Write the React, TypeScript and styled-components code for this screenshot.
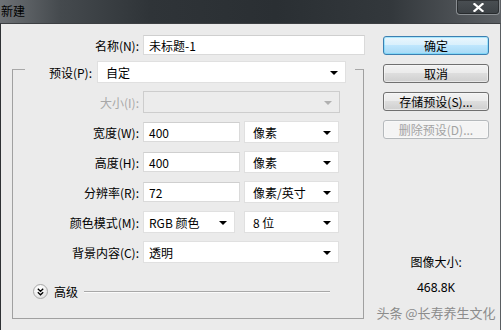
import React from 'react';
import styled, { createGlobalStyle } from 'styled-components';

const Global = createGlobalStyle`
  html, body { margin: 0; padding: 0; width: 501px; height: 330px; overflow: hidden; background: #ebebeb; }
  body { font-family: "Noto Sans CJK SC", "Microsoft YaHei", sans-serif; font-size: 12px; color: #000; }
  #root { width: 501px; height: 330px; }
`;

const Window = styled.div`
  width: 501px;
  height: 330px;
  display: flex;
  flex-direction: column;
  background: #ebebeb;
  overflow: hidden;
`;

const TitleBar = styled.div`
  height: 23px;
  flex: none;
  display: flex;
  align-items: flex-start;
  justify-content: space-between;
  background: linear-gradient(90deg, #6d7175 0%, #454a4e 12%, #2f3438 30%, #2a2f33 55%, #33383c 78%, #5c6064 100%);
`;

const Title = styled.div`
  font-size: 12px;
  line-height: 21px;
  padding-left: 1px;
  color: #000;
`;

const CloseBtn = styled.div`
  width: 44px;
  height: 15px;
  margin-right: 1px;
  box-sizing: border-box;
  border: 1px solid #8a8e92;
  border-top: none;
  border-radius: 0 0 4px 4px;
  display: flex;
  align-items: center;
  justify-content: center;
  background: linear-gradient(180deg, #4a4f53, #3c4145);
  box-shadow: inset 0 0 0 1px rgba(0, 0, 0, 0.35);
`;

const Body = styled.div`
  flex: 1;
  display: flex;
  border-top: 1px solid #3c3f42;
  border-left: 1px solid #2e3134;
  border-right: 1px solid #5a5e62;
`;

const LeftCol = styled.div`
  width: 382px;
  flex: none;
  display: flex;
  flex-direction: column;
  padding-top: 10px;
  box-sizing: border-box;
`;

const RightCol = styled.div`
  width: 106px;
  flex: none;
  display: flex;
  flex-direction: column;
  align-items: center;
  padding-top: 12px;
  padding-bottom: 5px;
  box-sizing: border-box;
`;

const ButtonStack = styled.div`
  display: flex;
  flex-direction: column;
  gap: 9px;
  width: 106px;
`;

const Button = styled.div<{ $primary?: boolean; $disabled?: boolean }>`
  height: 19px;
  box-sizing: border-box;
  border-radius: 3px;
  display: flex;
  align-items: center;
  justify-content: center;
  font-size: 12px;
  line-height: 1;
  color: ${p => (p.$disabled ? '#a3a3a3' : '#000')};
  border: 1px solid ${p => (p.$primary ? '#3c7fb1' : p.$disabled ? '#b5b9bc' : '#707070')};
  background: ${p =>
    p.$primary
      ? 'linear-gradient(180deg, #eaf6fd 0%, #d9f0fc 45%, #bee6fd 50%, #a7d9f5 100%)'
      : p.$disabled
      ? '#f4f4f4'
      : 'linear-gradient(180deg, #f2f2f2 0%, #ebebeb 45%, #dddddd 50%, #cfcfcf 100%)'};
  box-shadow: ${p => (p.$primary ? 'inset 0 0 0 1px #48d1fb66' : 'inset 0 0 0 1px #fcfcfc88')};
`;

const Info = styled.div`
  margin-top: auto;
  display: flex;
  flex-direction: column;
  align-items: center;
`;

const InfoLine = styled.div<{ $muted?: boolean }>`
  height: 25px;
  line-height: 25px;
  white-space: nowrap;
  font-size: ${p => (p.$muted ? '13px' : '12px')};
  color: ${p => (p.$muted ? '#8c8c8c' : '#000')};
  font-family: ${p => (p.$muted ? '"Noto Sans CJK SC", sans-serif' : '"Noto Sans", "Noto Sans CJK SC", sans-serif')};
`;

const Row = styled.div<{ $labelWidth: number }>`
  display: grid;
  grid-template-columns: ${p => p.$labelWidth}px auto;
  column-gap: 4px;
  align-items: center;
  height: 22px;
`;

const ControlGroup = styled.div`
  display: flex;
  align-items: center;
`;

const Label = styled.div<{ $disabled?: boolean }>`
  text-align: right;
  white-space: nowrap;
  font-size: 12px;
  color: ${p => (p.$disabled ? '#a8a8a8' : '#000')};
`;

const TextBox = styled.div<{ $w: number }>`
  width: ${p => p.$w}px;
  height: 20px;
  box-sizing: border-box;
  background: #fff;
  border: 1px solid #dadada;
  border-top-color: #cfcfcf;
  padding-left: 5px;
  display: flex;
  align-items: center;
  font-size: 12px;
  white-space: nowrap;
`;

const Select = styled.div<{ $w: number; $pad?: number; $disabled?: boolean; $ml?: number }>`
  width: ${p => p.$w}px;
  height: 22px;
  margin-left: ${p => p.$ml ?? 0}px;
  box-sizing: border-box;
  background: ${p => (p.$disabled ? '#ececec' : '#fff')};
  border: 1px solid ${p => (p.$disabled ? '#cdcdcd' : '#e0e0e0')};
  padding-left: ${p => p.$pad ?? 5}px;
  padding-right: 7px;
  display: flex;
  align-items: center;
  justify-content: space-between;
  font-size: 12px;
  white-space: nowrap;
`;

const Arrow = styled.span<{ $disabled?: boolean }>`
  width: 0;
  height: 0;
  border-left: 4px solid transparent;
  border-right: 4px solid transparent;
  border-top: 4px solid ${p => (p.$disabled ? '#b0b0b0' : '#000')};
  margin-top: 1px;
`;

const Group = styled.fieldset`
  margin: 0 0 0 11px;
  width: 352px;
  box-sizing: border-box;
  border: 1px solid #a0a0a0;
  border-top-color: #a8a8a8;
  padding: 8px 0 19px 0;
  display: flex;
  flex-direction: column;
  gap: 8px;
  min-width: 0;
`;

const Legend = styled.legend`
  margin-left: 12px;
  padding: 5px 9px 0 0;
  display: flex;
  align-items: center;
  height: 27px;
  box-sizing: border-box;
`;

const LegendLabel = styled.div`
  width: 67px;
  text-align: right;
  margin-right: 5px;
  font-size: 12px;
  white-space: nowrap;
`;

const Rows = styled.div`
  display: flex;
  flex-direction: column;
  gap: 8px;
`;

const Advanced = styled.div`
  display: flex;
  align-items: center;
  height: 15px;
  margin: 13px 33px 0 20px;
  gap: 6px;
`;

const AdvToggle = styled.div`
  width: 15px;
  height: 15px;
  box-sizing: border-box;
  border-radius: 50%;
  border: 1px solid #a9a9a9;
  background: radial-gradient(circle at 40% 30%, #ffffff 0%, #f3f3f3 45%, #d4d4d4 100%);
  display: flex;
  align-items: center;
  justify-content: center;
`;

const AdvText = styled.div`
  font-size: 12px;
  line-height: 15px;
`;

const AdvLine = styled.div`
  flex: 1;
  height: 0;
  border-top: 1px solid #a8a8a8;
  border-bottom: 1px solid #fafafa;
`;

export default function App() {
  return (
    <>
      <Global />
      <Window>
        <TitleBar>
          <Title>新建</Title>
          <CloseBtn>
            <svg width="11" height="9" viewBox="0 0 11 9">
              <path d="M1.5 1 L9.5 8 M9.5 1 L1.5 8" stroke="#fff" strokeWidth="2.2" strokeLinecap="square" />
            </svg>
          </CloseBtn>
        </TitleBar>
        <Body>
          <LeftCol>
            <Row $labelWidth={138}>
              <Label>名称(N):</Label>
              <TextBox $w={222}>未标题-1</TextBox>
            </Row>
            <Group>
              <Legend>
                <LegendLabel>预设(P):</LegendLabel>
                <Select $w={249} $pad={8}>
                  <span>自定</span>
                  <Arrow />
                </Select>
              </Legend>
              <Rows>
                <Row $labelWidth={126}>
                  <Label $disabled>大小(I):</Label>
                  <Select $w={197} $disabled>
                    <span />
                    <Arrow $disabled />
                  </Select>
                </Row>
                <Row $labelWidth={126}>
                  <Label>宽度(W):</Label>
                  <ControlGroup>
                    <TextBox $w={97}>400</TextBox>
                    <Select $w={95} $pad={8} $ml={4}>
                      <span>像素</span>
                      <Arrow />
                    </Select>
                  </ControlGroup>
                </Row>
                <Row $labelWidth={126}>
                  <Label>高度(H):</Label>
                  <ControlGroup>
                    <TextBox $w={97}>400</TextBox>
                    <Select $w={95} $pad={8} $ml={4}>
                      <span>像素</span>
                      <Arrow />
                    </Select>
                  </ControlGroup>
                </Row>
                <Row $labelWidth={126}>
                  <Label>分辨率(R):</Label>
                  <ControlGroup>
                    <TextBox $w={97}>72</TextBox>
                    <Select $w={95} $pad={8} $ml={4}>
                      <span>像素/英寸</span>
                      <Arrow />
                    </Select>
                  </ControlGroup>
                </Row>
                <Row $labelWidth={126}>
                  <Label>颜色模式(M):</Label>
                  <ControlGroup>
                    <Select $w={92}>
                      <span>RGB 颜色</span>
                      <Arrow />
                    </Select>
                    <Select $w={95} $pad={8} $ml={9}>
                      <span>8 位</span>
                      <Arrow />
                    </Select>
                  </ControlGroup>
                </Row>
                <Row $labelWidth={126}>
                  <Label>背景内容(C):</Label>
                  <Select $w={196}>
                    <span>透明</span>
                    <Arrow />
                  </Select>
                </Row>
              </Rows>
              <Advanced>
                <AdvToggle>
                  <svg width="7" height="8" viewBox="0 0 7 8">
                    <path d="M0.8 0.8 L3.5 3.3 L6.2 0.8 M0.8 4.3 L3.5 6.8 L6.2 4.3" stroke="#000" strokeWidth="1.3" fill="none" />
                  </svg>
                </AdvToggle>
                <AdvText>高级</AdvText>
                <AdvLine />
              </Advanced>
            </Group>
          </LeftCol>
          <RightCol>
            <ButtonStack>
              <Button $primary>确定</Button>
              <Button>取消</Button>
              <Button>存储预设(S)...</Button>
              <Button $disabled>删除预设(D)...</Button>
            </ButtonStack>
            <Info>
              <InfoLine>图像大小:</InfoLine>
              <InfoLine>468.8K</InfoLine>
              <InfoLine $muted>头条 @长寿养生文化</InfoLine>
            </Info>
          </RightCol>
        </Body>
      </Window>
    </>
  );
}
